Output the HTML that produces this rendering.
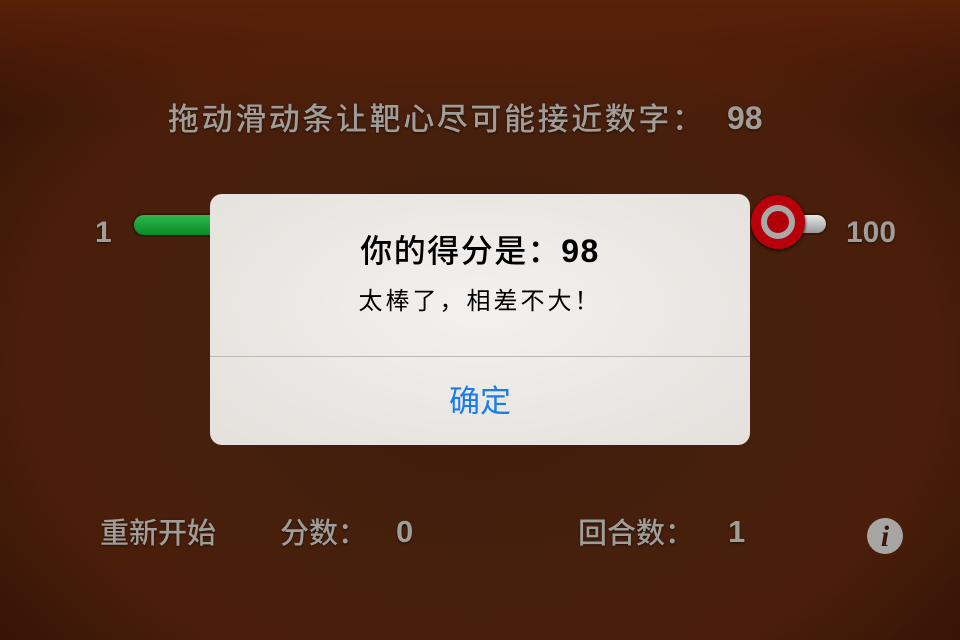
<html><head><style>
body{margin:0;width:960px;height:640px;overflow:hidden;position:relative;
background:radial-gradient(ellipse 700px 520px at 480px 360px,#3e1a0b 0%,#46200d 40%,#4a1e0a 65%,#2a0e04 100%);
font-family:"Liberation Sans","Noto Sans CJK SC",sans-serif;}
.top{position:absolute;left:0;top:0;width:960px;height:120px;background:linear-gradient(#5a2008,rgba(90,32,8,0));}
.t{position:absolute;color:#a09c98;font-weight:bold;text-shadow:0 1px 2px rgba(0,0,0,.6);white-space:nowrap}
.c{font-weight:500}
.dlg{position:absolute;left:210px;top:194px;width:540px;height:251px;border-radius:12px;
background:radial-gradient(ellipse at 50% 45%,#f3f1ee,#e4e0dc);overflow:hidden}
</style></head><body>
<div class="top"></div>
<div class="t c" style="left:168px;top:94px;font-size:31px;letter-spacing:2.6px">拖动滑动条让靶心尽可能接近数字：</div>
<div class="t" style="left:727px;top:100px;font-size:32px">98</div>
<div class="t" style="left:95px;top:216px;font-size:30px">1</div>
<div class="t" style="left:846px;top:216px;font-size:30px">100</div>
<div style="position:absolute;left:134px;top:215px;width:120px;height:20px;border-radius:10px;background:linear-gradient(#2eb84c,#0a8a28);box-shadow:0 0 0 2px #3a1606"></div>
<div style="position:absolute;left:790px;top:215px;width:36px;height:18px;border-radius:9px;background:linear-gradient(#e8e8e8,#9a9a9a);box-shadow:0 0 0 2px #3a1606"></div>
<div style="position:absolute;left:751px;top:195px;width:54px;height:54px;border-radius:50%;background:#b8000a;box-shadow:0 1px 3px #000"></div>
<div style="position:absolute;left:761px;top:205px;width:22px;height:22px;border-radius:50%;background:#b00008;border:6px solid #a8a8a8"></div>
<div class="t c" style="left:100px;top:510px;font-size:29px">重新开始</div>
<div class="t c" style="left:280px;top:510px;font-size:29px">分数：</div>
<div class="t" style="left:396px;top:514px;font-size:31px">0</div>
<div class="t c" style="left:578px;top:510px;font-size:29px">回合数：</div>
<div class="t" style="left:728px;top:514px;font-size:31px">1</div>
<div style="position:absolute;left:867px;top:518px;width:36px;height:36px;border-radius:50%;background:#a8a6a4;color:#3a1608;font:italic bold 30px 'Liberation Serif',serif;text-align:center;line-height:37px">i</div>
<div class="dlg">
<div style="position:absolute;left:0;width:540px;top:32px;text-align:center;font-size:32px;letter-spacing:1.5px;font-weight:500;color:#000">你的得分是：<b>98</b></div>
<div style="position:absolute;left:0;width:540px;top:87px;text-align:center;font-size:24px;letter-spacing:3px;color:#000">太棒了，相差不大！</div>
<div style="position:absolute;left:0;top:162px;width:540px;height:1px;background:#bcb8b4"></div>
<div style="position:absolute;left:0;width:540px;top:182px;text-align:center;font-size:31px;color:#1a7cf0">确定</div>
</div>
</body></html>
